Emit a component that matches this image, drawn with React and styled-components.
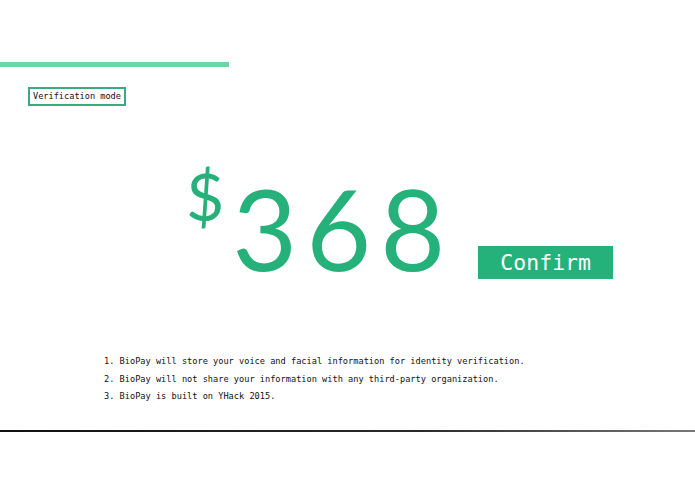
import React from 'react';
import styled, { createGlobalStyle } from 'styled-components';

const GlobalStyle = createGlobalStyle`
  html, body {
    margin: 0;
    padding: 0;
    background: #fff;
  }
`;

const Screen = styled.main`
  height: 432px;
  box-sizing: border-box;
  padding-top: 62px;
  border-bottom: 2px solid #1e1e1e;
  border-image: linear-gradient(90deg, #111 0%, #2a2a2a 60%, #777 100%) 1;
  font-family: 'DejaVu Sans Mono', 'Liberation Mono', monospace;
`;

const Progress = styled.div`
  width: 229px;
  height: 5px;
  background: #6dd6a5;
`;

const ModeTag = styled.div`
  display: inline-block;
  margin: 20px 0 0 28px;
  padding: 0 3px;
  height: 15px;
  line-height: 15px;
  border: 2px solid #3aaa80;
  font-size: 8.6px;
  color: #111;
`;

const PriceRow = styled.section`
  display: flex;
  align-items: flex-start;
  margin-top: 57px;
  padding-left: 186px;
`;

const Currency = styled.span`
  font-family: Lato, 'Open Sans', sans-serif;
  font-size: 66px;
  line-height: 1;
  color: #26b07a;
`;

const Amount = styled.span`
  font-family: Lato, 'Open Sans', sans-serif;
  font-size: 112px;
  line-height: 1;
  margin-top: 9px;
  margin-left: 8px;
  letter-spacing: 9px;
  color: #26b07a;
`;

const ConfirmButton = styled.button`
  margin: 83px 0 0 24px;
  width: 135px;
  height: 33px;
  border: none;
  background: #25b17a;
  color: #fff;
  font-family: 'DejaVu Sans Mono', 'Liberation Mono', monospace;
  font-size: 21.5px;
  cursor: pointer;
`;

const Terms = styled.ol`
  margin: 69px 0 0;
  padding-left: 104px;
  list-style: decimal inside;
  font-size: 8.65px;
  line-height: 17.5px;
  color: #111;
`;

export default function App() {
  return (
    <>
      <GlobalStyle />
      <Screen>
        <Progress />
        <ModeTag>Verification mode</ModeTag>
        <PriceRow>
          <Currency>$</Currency>
          <Amount>368</Amount>
          <ConfirmButton>Confirm</ConfirmButton>
        </PriceRow>
        <Terms>
          <li>BioPay will store your voice and facial information for identity verification.</li>
          <li>BioPay will not share your information with any third-party organization.</li>
          <li>BioPay is built on YHack 2015.</li>
        </Terms>
      </Screen>
    </>
  );
}
